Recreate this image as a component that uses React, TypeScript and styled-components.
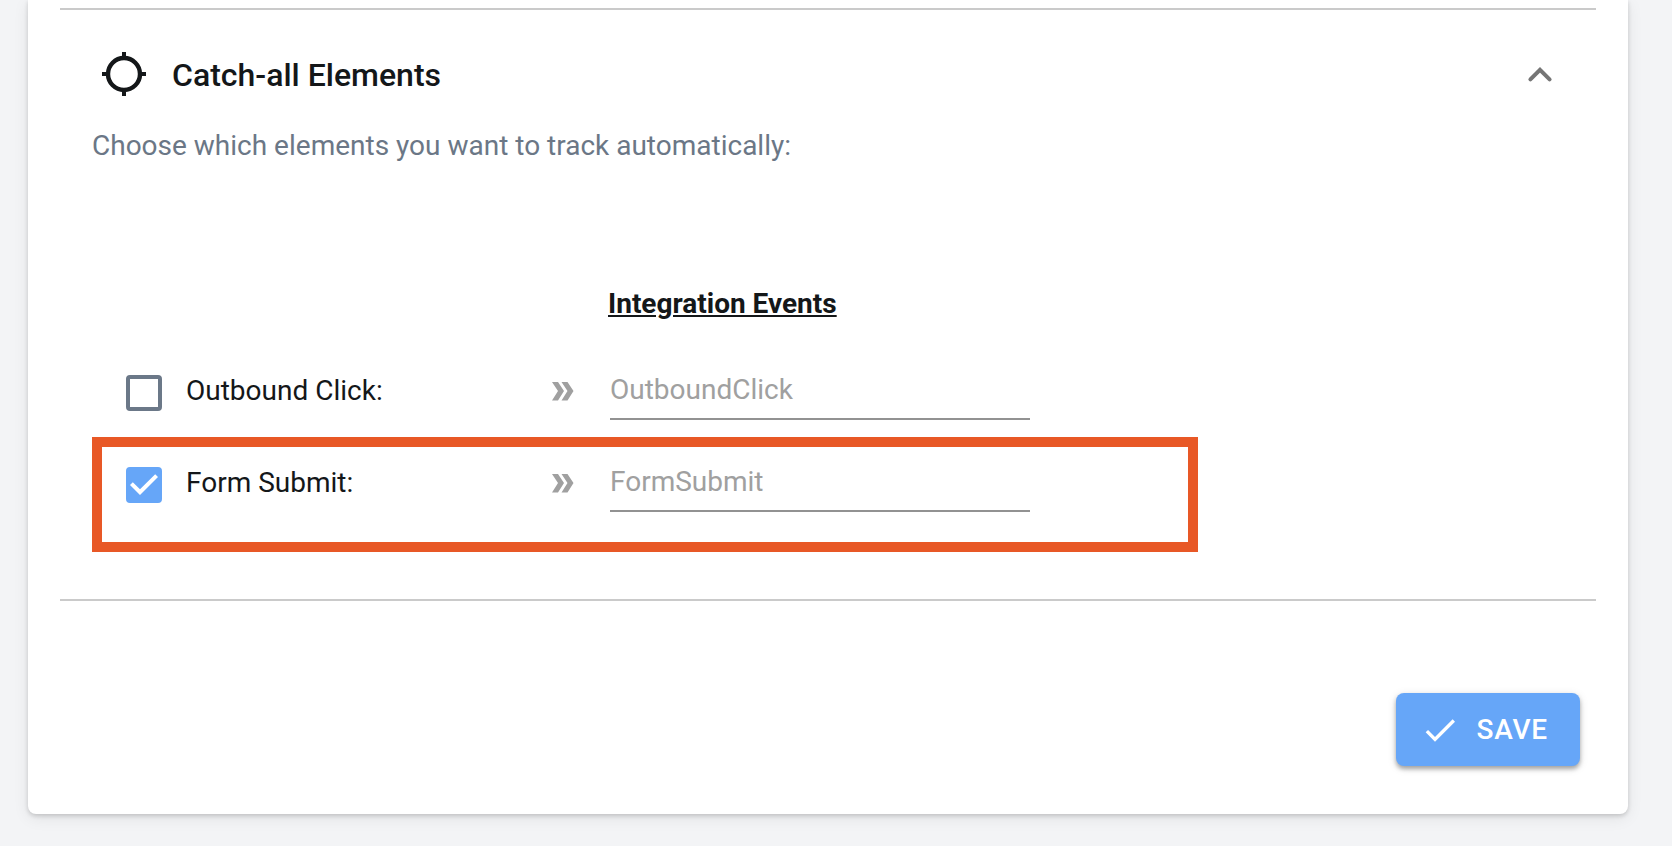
import React from "react";
import styled, { createGlobalStyle } from "styled-components";

const GlobalStyle = createGlobalStyle`
  *, *::before, *::after { box-sizing: border-box; }
  body {
    margin: 0;
    background: #f3f4f6;
    color: #141719;
    font-family: Roboto, "Liberation Sans", sans-serif;
    font-size: 28px;
    line-height: 40px;
  }
`;

const Page = styled.main`
  padding: 0 44px 32px 28px;
`;

const Card = styled.div`
  padding: 8px 32px 48px;
  background: #fff;
  border-radius: 0 0 8px 8px;
  box-shadow: 0 2px 4px rgba(0, 0, 0, 0.16), 0 4px 16px rgba(0, 0, 0, 0.08);
`;

const Divider = styled.hr`
  height: 2px;
  margin: 0;
  border: 0;
  background: #cacaca;
`;

const Section = styled.section`
  padding: 40px 32px 47px;
`;

const SectionHeader = styled.header`
  display: flex;
  align-items: center;
  gap: 24px;
  padding-left: 8px;
`;

const Icon = styled.svg`
  display: block;
  width: 48px;
  height: 48px;
  flex: none;
`;

const SectionTitle = styled.h2`
  flex: 1;
  margin: 0;
  font-size: 32px;
  font-weight: 500;
  line-height: 50px;
`;

const CollapseButton = styled.button`
  padding: 0;
  border: 0;
  background: none;
  color: #757575;
  cursor: pointer;
`;

const Description = styled.p`
  margin: 26px 0 0;
  color: #6b7786;
`;

const EventGrid = styled.div`
  margin-top: 118px;
`;

const rowColumns = `
  display: grid;
  grid-template-columns: 426px 56px minmax(0, 422px);
  align-items: start;
`;

const HeadingRow = styled.div`
  ${rowColumns}
  padding: 0 34px;
  margin-bottom: 45px;
`;

const ColumnHeading = styled.h3`
  grid-column: 3;
  margin: 0;
  font-size: 28px;
  font-weight: 700;
  text-decoration: underline;
`;

const EventRow = styled.div<{ $highlighted: boolean }>`
  ${rowColumns}
  max-width: 1106px;
  padding: ${(p) => (p.$highlighted ? "14px 24px 30px" : "0 34px 17px")};
  border: ${(p) => (p.$highlighted ? "10px solid #e85826" : "0")};
`;

const EventLabel = styled.label`
  display: flex;
  align-items: center;
  gap: 24px;
  height: 44px;
`;

const CheckboxBox = styled.span`
  position: relative;
  display: block;
  width: 36px;
  height: 36px;
  margin-top: 4px;
`;

const Checkbox = styled.input`
  appearance: none;
  display: block;
  width: 36px;
  height: 36px;
  margin: 0;
  border: 4px solid #6b7888;
  border-radius: 4px;
  cursor: pointer;

  &:checked {
    border-color: #66a6f8;
    background: #66a6f8;
  }

  & + svg {
    position: absolute;
    inset: 0;
    display: none;
    pointer-events: none;
  }

  &:checked + svg {
    display: block;
  }
`;

const Arrow = styled.svg`
  display: block;
  width: 22px;
  height: 44px;
`;

const EventField = styled.div`
  padding-left: 2px;
`;

const EventInput = styled.input`
  display: block;
  width: 100%;
  height: 51px;
  padding: 0 0 9px;
  border: 0;
  border-bottom: 2px solid #929292;
  border-radius: 0;
  outline: 0;
  background: none;
  color: #141719;
  font: inherit;

  &::placeholder {
    color: #a0a0a0;
    opacity: 1;
  }
`;

const Actions = styled.div`
  display: flex;
  justify-content: flex-end;
  padding: 92px 16px 0;
`;

const SaveButton = styled.button`
  display: flex;
  align-items: center;
  gap: 17px;
  height: 73px;
  padding: 0 32px 0 24px;
  border: 0;
  border-radius: 8px;
  background: #66a6f8;
  box-shadow: 0 3px 4px rgba(0, 0, 0, 0.3), 0 2px 10px rgba(0, 0, 0, 0.12);
  color: #fff;
  font: inherit;
  font-weight: 500;
  letter-spacing: 0.02857em;
  text-transform: uppercase;
  cursor: pointer;
`;

const SaveIcon = styled.svg`
  width: 40px;
  height: 40px;
`;

const events = [
  { id: "outbound", label: "Outbound Click:", placeholder: "OutboundClick", checked: false, highlighted: false },
  { id: "form", label: "Form Submit:", placeholder: "FormSubmit", checked: true, highlighted: true },
];

export default function App() {
  return (
    <>
      <GlobalStyle />
      <Page>
        <Card>
          <Divider />
          <Section>
            <SectionHeader>
              <Icon viewBox="0 0 48 48" fill="none" stroke="#141719" strokeWidth="4" aria-hidden="true">
                <circle cx="24" cy="23" r="16" strokeWidth="4.4" />
                <path d="M24 1v6M24 39v6M2 23h6M40 23h6" />
              </Icon>
              <SectionTitle>Catch-all Elements</SectionTitle>
              <CollapseButton type="button" aria-label="Collapse section" aria-expanded="true">
                <Icon
                  viewBox="0 0 24 24"
                  fill="none"
                  stroke="currentColor"
                  strokeWidth="2"
                  strokeLinecap="round"
                  aria-hidden="true"
                >
                  <path d="M7.200 14.200 12 9.400l4.800 4.800" />
                </Icon>
              </CollapseButton>
            </SectionHeader>
            <Description>Choose which elements you want to track automatically:</Description>
            <EventGrid>
              <HeadingRow>
                <ColumnHeading>Integration Events</ColumnHeading>
              </HeadingRow>
              {events.map((e) => (
                <EventRow key={e.id} $highlighted={e.highlighted}>
                  <EventLabel htmlFor={e.id}>
                    <CheckboxBox>
                      <Checkbox id={e.id} type="checkbox" defaultChecked={e.checked} />
                      <svg viewBox="3 3 18 18" width="36" height="36" fill="#fff" aria-hidden="true">
                        <path d="M10 17l-5-5 1.410-1.410L10 14.170l7.590-7.590L19 8z" />
                      </svg>
                    </CheckboxBox>
                    {e.label}
                  </EventLabel>
                  <Arrow viewBox="0 0 22 44" fill="#a0a0a0" aria-hidden="true">
                    <path d="M0 13h6l6 9-6 9.500H0l6-9.500zM9.500 13h6l6 9-6 9.500h-6l6-9.500z" />
                  </Arrow>
                  <EventField>
                    <EventInput type="text" placeholder={e.placeholder} aria-label={`${e.label} integration event`} />
                  </EventField>
                </EventRow>
              ))}
            </EventGrid>
          </Section>
          <Divider />
          <Actions>
            <SaveButton type="button">
              <SaveIcon viewBox="0 0 24 24" fill="currentColor" aria-hidden="true">
                <path d="M9 16.170 4.830 12l-1.420 1.410L9 19 21 7l-1.410-1.410z" />
              </SaveIcon>
              Save
            </SaveButton>
          </Actions>
        </Card>
      </Page>
    </>
  );
}
